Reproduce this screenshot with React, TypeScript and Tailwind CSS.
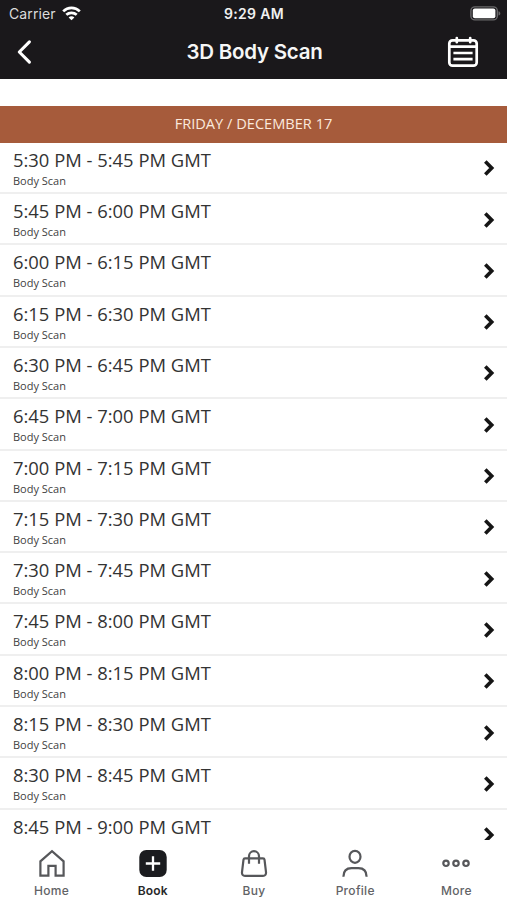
import React from "react";

const slots = [
  "5:30 PM - 5:45 PM GMT",
  "5:45 PM - 6:00 PM GMT",
  "6:00 PM - 6:15 PM GMT",
  "6:15 PM - 6:30 PM GMT",
  "6:30 PM - 6:45 PM GMT",
  "6:45 PM - 7:00 PM GMT",
  "7:00 PM - 7:15 PM GMT",
  "7:15 PM - 7:30 PM GMT",
  "7:30 PM - 7:45 PM GMT",
  "7:45 PM - 8:00 PM GMT",
  "8:00 PM - 8:15 PM GMT",
  "8:15 PM - 8:30 PM GMT",
  "8:30 PM - 8:45 PM GMT",
  "8:45 PM - 9:00 PM GMT",
];

function StatusBar() {
  return (
    <div className="grid h-[27px] grid-cols-3 items-center">
      <div className="flex items-center gap-[6px] pl-[9px]">
        <span className="text-[14px] leading-[27px] tracking-[0.1px] text-[#dcdcdc]">Carrier</span>
        <svg width="19" height="15" viewBox="0 0 19 15" fill="none" stroke="#fff" strokeWidth="2.7">
          <path d="M1.2 5.4C5.8 .8 13.2 .8 17.8 5.4" />
          <path d="M4.3 8.8C7.2 6.1 11.8 6.1 14.7 8.8" />
          <path d="M9.5 14.2 6.6 11.4C8.2 10 10.8 10 12.4 11.4Z" fill="#fff" stroke="none" />
        </svg>
      </div>
      <div className="pl-px text-center text-[14px] leading-[27px] font-semibold tracking-[0.3px] text-[#f0f0f0]">9:29 AM</div>
      <div className="flex justify-end pr-[6px]">
        <svg width="31" height="15" viewBox="0 0 31 15">
          <rect x="0.9" y="0.9" width="26.4" height="13" rx="4" fill="none" stroke="#69686a" strokeWidth="1.4" />
          <rect x="2.8" y="2.6" width="22.6" height="9.6" rx="2" fill="#fff" />
          <path d="M28.5 5.2c2.4.7 2.4 3.7 0 4.4z" fill="#69686a" />
        </svg>
      </div>
    </div>
  );
}

function Header() {
  return (
    <header className="h-[79px] shrink-0 bg-[#1a181b]">
      <StatusBar />
      <div className="grid h-[50px] grid-cols-[80px_1fr_80px] items-center">
        <svg className="ml-[16px]" width="17" height="26" viewBox="0 0 17 26" fill="none" stroke="#fff" strokeWidth="3.1" strokeLinecap="round" strokeLinejoin="round">
          <path d="M13.4 2.9 3.3 13l10.1 10.1" />
        </svg>
        <h1 className="pl-[2px] text-center text-[20.5px] font-semibold tracking-[-0.25px] text-[#f6f6f6]">3D Body Scan</h1>
        <svg className="ml-[20px]" width="32" height="32" viewBox="0 0 32 32" fill="none" stroke="#fff" strokeWidth="2.7" strokeLinecap="round">
          <rect x="2.3" y="4.3" width="27.4" height="25.4" rx="3.2" />
          <path d="M3 10.7h26M9.8 2v4.2M23.2 2v4.2" />
          <path d="M6.4 17h19.2M6.4 23.2h19.2" strokeLinecap="butt" />
        </svg>
      </div>
    </header>
  );
}

function SlotRow({ time, showService }: { time: string; showService: boolean }) {
  return (
    <li className="flex h-[51.31px] shrink-0 items-start justify-between border-b-2 border-[#efefef] pl-[13px] pr-[11px]">
      <div className="pt-[5px] font-['Open_Sans','Noto_Sans',sans-serif]">
        <div className="whitespace-nowrap text-[18.4px] leading-[24px] text-[#333]">{time}</div>
        {showService && <div className="text-[11px] leading-[18px] text-[#3f3f3f]">Body Scan</div>}
      </div>
      <svg className="mt-[16.5px]" width="13" height="18" viewBox="0 0 13 18" fill="none" stroke="#151515" strokeWidth="3.6">
        <path d="m2.3 2.6 6.4 6.4-6.4 6.4" />
      </svg>
    </li>
  );
}

function Tab({ label, active, children }: { label: string; active?: boolean; children: React.ReactNode }) {
  return (
    <div className="flex flex-1 flex-col items-center pt-[8px]">
      <svg width="30" height="30" viewBox="0 0 30 30" fill="none" stroke="#56575a" strokeWidth="2.2">
        {children}
      </svg>
      <span
        className={
          active
            ? "mt-[5px] text-[12px] leading-[16px] font-semibold tracking-[0.2px] text-[#27282a]"
            : "mt-[5px] text-[12px] leading-[16px] font-medium tracking-[0.3px] text-[#626366]"
        }
      >
        {label}
      </span>
    </div>
  );
}

export default function App() {
  return (
    <div className="flex h-[900px] w-[507px] flex-col overflow-hidden bg-white font-['Inter','Liberation_Sans',sans-serif]">
      <Header />
      <main className="flex h-[761px] shrink-0 flex-col overflow-hidden pt-[27px]">
        <div className="h-[36.5px] shrink-0 bg-[#a65b3b] text-center font-['Open_Sans','Noto_Sans',sans-serif] text-[14.6px] leading-[35px] text-[#fbe9dd]">
          FRIDAY / DECEMBER 17
        </div>
        <ul className="flex flex-col pt-[0.3px]">
          {slots.map((time, i) => (
            <SlotRow key={time} time={time} showService={i < slots.length - 1} />
          ))}
        </ul>
      </main>
      <nav className="flex h-[60px] shrink-0 bg-white pl-px">
        <Tab label="Home">
          <path d="M3.4 27.6V13.3L15 3.2l11.6 10.1v14.3h-8v-9.8h-7.2v9.8z" />
        </Tab>
        <Tab label="Book" active>
          <rect x="1.3" y="2" width="27.4" height="27" rx="7" fill="#1b1c1f" stroke="none" />
          <path d="M15 8.3v14.4M7.8 15.5h14.4" stroke="#fff" strokeWidth="2.3" />
        </Tab>
        <Tab label="Buy">
          <path d="M6 10.3h18q1.3 0 1.5 1.3L27 24.2q.3 3.6-3 3.6H6q-3.3 0-3-3.6l1.5-12.6q.2-1.3 1.5-1.3z" strokeLinejoin="round" />
          <path d="M10 15.8V8.2a5 5 0 0 1 10 0v7.6" />
        </Tab>
        <Tab label="Profile">
          <ellipse cx="15" cy="8.8" rx="5.5" ry="6" />
          <path d="M3.4 28.8c0-5.6 3.2-8.6 8.2-8.6h6.8c5 0 8.2 3 8.2 8.6" />
        </Tab>
        <Tab label="More">
          <circle cx="5" cy="15.3" r="2.7" />
          <circle cx="15" cy="15.3" r="2.7" />
          <circle cx="25" cy="15.3" r="2.7" />
        </Tab>
      </nav>
    </div>
  );
}
